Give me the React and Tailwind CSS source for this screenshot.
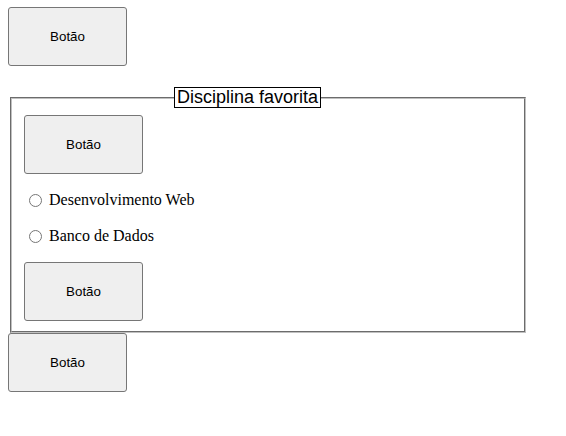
export default function App() {
  const btn =
    "block w-[119px] h-[59px] bg-[#efefef] border border-[#767676] rounded-[3px] text-[13.333px] text-black [font-family:'Liberation_Sans',Arial,sans-serif]";
  return (
    <div className="w-[566px] h-[436px] bg-white pl-[8px] pt-[7px] [font-family:'Liberation_Serif','Times_New_Roman',serif] text-black">
      <button className={btn}>Botão</button>
      <fieldset className="mt-[21px] ml-[2px] w-[516px] border-2 [border-style:groove] border-[#c0c0c0] px-[12px] pt-[7px] pb-[10px]">
        <legend className="ml-[150px] px-[2px] border border-black text-[18px] leading-[19px] [font-family:'Liberation_Sans',Arial,sans-serif]">
          Disciplina favorita
        </legend>
        <button className={btn}>Botão</button>
        <label className="mt-[17px] flex items-center h-[18px] text-[16px]">
          <input type="radio" name="d" className="m-0 ml-[5px] mr-[7px] w-[13px] h-[13px]" />
          Desenvolvimento Web
        </label>
        <label className="mt-[18px] flex items-center h-[18px] text-[16px]">
          <input type="radio" name="d" className="m-0 ml-[5px] mr-[7px] w-[13px] h-[13px]" />
          Banco de Dados
        </label>
        <button className={btn + " mt-[17px]"}>Botão</button>
      </fieldset>
      <button className={btn}>Botão</button>
    </div>
  );
}
